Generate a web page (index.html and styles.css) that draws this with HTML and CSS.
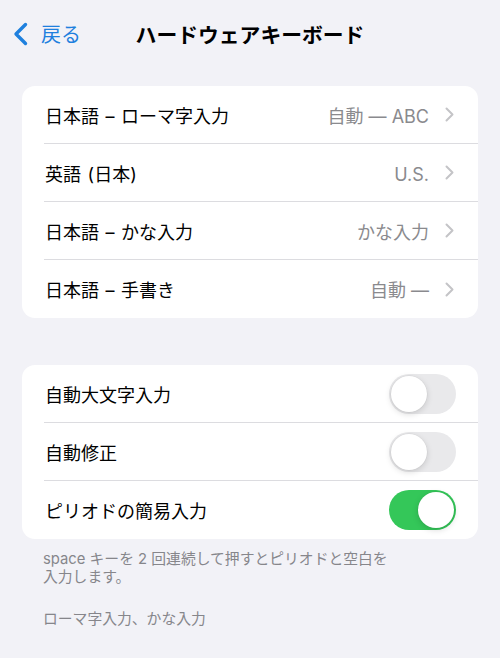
FILE: index.html
```html
<!DOCTYPE html>
<html lang="ja">
<head>
<meta charset="utf-8">
<link rel="stylesheet" href="styles.css">
</head>
<body>
<header class="nav">
  <div class="back">
    <svg class="back-chev" width="17" height="24" viewBox="0 0 17 24"><path d="M13.5 2.5 L4 12 L13.5 21.5" fill="none" stroke="#1f80de" stroke-width="3.4" stroke-linecap="round" stroke-linejoin="round"/></svg>
    <span class="back-label">戻る</span>
  </div>
  <div class="title">ハードウェアキーボード</div>
  <div></div>
</header>

<section class="card first">
  <div class="row"><div class="row-in">
    <span class="label">日本語 – ローマ字入力</span>
    <span class="value">自動 — ABC</span>
    <svg class="chev" width="9" height="15" viewBox="0 0 9 15"><path d="M1.5 1.5 L7.5 7.5 L1.5 13.5" fill="none" stroke="#c4c4c7" stroke-width="2" stroke-linecap="round" stroke-linejoin="round"/></svg>
  </div></div>
  <div class="row"><div class="row-in">
    <span class="label">英語 (日本)</span>
    <span class="value">U.S.</span>
    <svg class="chev" width="9" height="15" viewBox="0 0 9 15"><path d="M1.5 1.5 L7.5 7.5 L1.5 13.5" fill="none" stroke="#c4c4c7" stroke-width="2" stroke-linecap="round" stroke-linejoin="round"/></svg>
  </div></div>
  <div class="row"><div class="row-in">
    <span class="label">日本語 – かな入力</span>
    <span class="value">かな入力</span>
    <svg class="chev" width="9" height="15" viewBox="0 0 9 15"><path d="M1.5 1.5 L7.5 7.5 L1.5 13.5" fill="none" stroke="#c4c4c7" stroke-width="2" stroke-linecap="round" stroke-linejoin="round"/></svg>
  </div></div>
  <div class="row"><div class="row-in last">
    <span class="label">日本語 – 手書き</span>
    <span class="value">自動 —</span>
    <svg class="chev" width="9" height="15" viewBox="0 0 9 15"><path d="M1.5 1.5 L7.5 7.5 L1.5 13.5" fill="none" stroke="#c4c4c7" stroke-width="2" stroke-linecap="round" stroke-linejoin="round"/></svg>
  </div></div>
</section>

<section class="card second">
  <div class="row"><div class="row-in">
    <span class="label">自動大文字入力</span>
    <span class="toggle"><span class="knob"></span></span>
  </div></div>
  <div class="row"><div class="row-in">
    <span class="label">自動修正</span>
    <span class="toggle"><span class="knob"></span></span>
  </div></div>
  <div class="row"><div class="row-in last">
    <span class="label">ピリオドの簡易入力</span>
    <span class="toggle on"><span class="knob"></span></span>
  </div></div>
</section>

<p class="foot">space キーを 2 回連続して押すとピリオドと空白を<br>入力します。</p>
<p class="foot foot2">ローマ字入力、かな入力</p>
</body>
</html>
```

FILE: styles.css
```css
* { box-sizing: border-box; }
body {
  margin: 0;
  background: #f2f2f7;
  font-family: "Inter", "Noto Sans CJK JP", sans-serif;
  color: #000;
  width: 500px;
  height: 658px;
  overflow: hidden;
}
.nav {
  height: 68px;
  display: grid;
  grid-template-columns: 1fr auto 1fr;
  align-items: center;
}
.back {
  display: flex;
  align-items: center;
  padding-left: 12px;
}
.back-chev { display: block; margin-right: 12px; }
.back-label {
  font-family: "Noto Sans CJK JP", sans-serif;
  font-size: 20px;
  color: #1f80de;
  line-height: 24px;
}
.title {
  font-family: "Noto Sans CJK JP", sans-serif;
  font-size: 20.8px;
  font-weight: 700;
  line-height: 24px;
}
.card {
  background: #fff;
  border-radius: 13px;
  margin: 0 22px;
  overflow: hidden;
}
.card.first { margin-top: 18px; }
.card.second { margin-top: 47px; }
.row {
  padding-left: 22px;
  height: 58px;
}
.row-in {
  height: 58px;
  display: flex;
  align-items: center;
  border-bottom: 1px solid #dcdce0;
  padding-right: 22px;
}
.row-in.last { border-bottom: none; }
.label {
  flex: 1;
  font-family: "Inter", "Noto Sans CJK JP", sans-serif;
  font-size: 18px;
  line-height: 24px;
  padding-left: 1px;
  padding-top: 4px;
  word-spacing: 1.5px;
}
.value {
  font-size: 18px;
  line-height: 24px;
  padding-top: 4px;
  color: #8a8a8e;
  margin-right: 16px;
}
.chev { display: block; margin-right: 2px; }
.toggle {
  width: 67px;
  height: 40px;
  border-radius: 20px;
  background: #e9e9eb;
  padding: 2px;
  display: flex;
  justify-content: flex-start;
}
.toggle.on {
  background: #34c759;
  justify-content: flex-end;
}
.knob {
  width: 36px;
  height: 36px;
  border-radius: 50%;
  background: #fff;
  box-shadow: 0 2px 6px rgba(0,0,0,0.15), 0 0 0 0.5px rgba(0,0,0,0.06);
}
.foot {
  margin: 0;
  padding: 11px 40px 0 43px;
  font-size: 14.8px;
  line-height: 18px;
  color: #86868b;
}
.foot2 { padding-top: 24px; }
```
